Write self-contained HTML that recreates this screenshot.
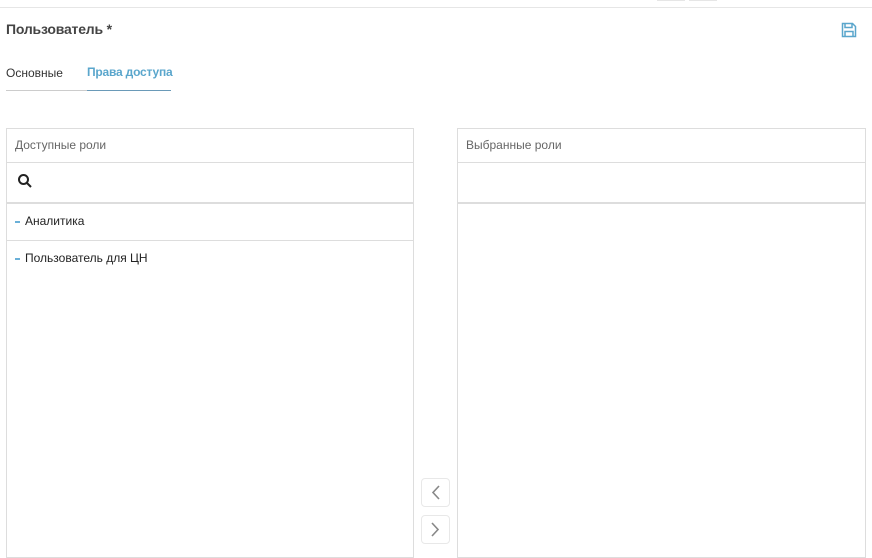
<!DOCTYPE html><html><head><meta charset="utf-8"><style>
body{margin:0;width:872px;height:553px;overflow:hidden;background:#fff;font-family:"Liberation Sans",sans-serif;position:relative}
.a{position:absolute}
.p{position:absolute;top:128px;height:430px;border:1px solid #ddd;box-sizing:border-box}
.h{height:33px;border-bottom:1px solid #ddd;font-size:12px;color:#666;line-height:32px;padding-left:8px}
.s{height:41px;border-bottom:2px solid #ddd;box-sizing:border-box;position:relative}
.r{height:36px;border-bottom:1px solid #ddd;font-size:12px;color:#222;line-height:35px;padding-left:8px}
.r i{display:inline-block;width:5px;height:2px;background:#6ab0d8;vertical-align:middle;margin-right:5px}
.b{position:absolute;left:421px;width:29px;height:29px;border:1px solid #e8e8e8;border-radius:4px;box-sizing:border-box}
</style></head><body>
<div class="a" style="left:0;top:7px;width:872px;height:1px;background:#e6e6e6"></div>
<div class="a" style="left:657px;top:0;width:28px;height:1px;background:#e6e6e6"></div>
<div class="a" style="left:689px;top:0;width:28px;height:1px;background:#e6e6e6"></div>
<div class="a" style="left:6px;top:21px;font-size:14px;font-weight:bold;color:#444;letter-spacing:-0.2px">Пользователь *</div>
<svg class="a" style="left:841px;top:22px" width="16" height="16" viewBox="0 0 16 16" fill="none" stroke="#5aa6cc" stroke-width="1.5"><path d="M1.5 1.5h10l3 3v10h-13z M4 1.5v4h7v-4 M4 14.5v-5h8v5"/></svg>
<div class="a" style="left:6px;top:66px;font-size:12px;color:#333">Основные</div>
<div class="a" style="left:87px;top:65px;font-size:12px;color:#5aa6cc;font-weight:bold;letter-spacing:-0.2px">Права доступа</div>
<div class="a" style="left:6px;top:90px;width:81px;height:1px;background:#ccc"></div>
<div class="a" style="left:87px;top:90px;width:84px;height:1px;background:#6a9ab8"></div>
<div class="p" style="left:6px;width:408px">
<div class="h">Доступные роли</div>
<div class="s"><svg class="a" style="left:10px;top:10px" width="16" height="16" viewBox="0 0 16 16" fill="none" stroke="#222" stroke-width="2"><circle cx="6.5" cy="6.5" r="4.5"/><path d="M10 10l4 4"/></svg></div>
<div class="r"><i></i>Аналитика</div>
<div class="r" style="border:none"><i></i>Пользователь для ЦН</div>
</div>
<div class="p" style="left:457px;width:409px">
<div class="h">Выбранные роли</div>
<div class="s"></div>
</div>
<div class="b" style="top:478px"><svg width="27" height="27" viewBox="0 0 27 27" fill="none" stroke="#888" stroke-width="1.6"><path d="M17 7l-6 6.5 6 6.5"/></svg></div>
<div class="b" style="top:515px"><svg width="27" height="27" viewBox="0 0 27 27" fill="none" stroke="#888" stroke-width="1.6"><path d="M10 7l6 6.5-6 6.5"/></svg></div>
</body></html>
